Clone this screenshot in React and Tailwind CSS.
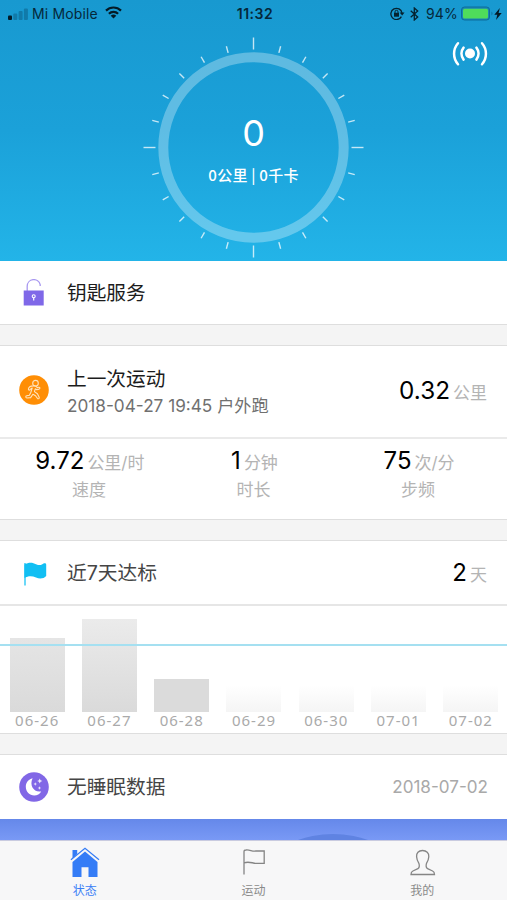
import React from "react";

const TICKS = Array.from({ length: 24 }, (_, i) => i * 15);

const DAYS = [
  { label: "06-26", height: 74, fill: "bg-linear-to-b from-[#e5e5e5] to-[#dadada]" },
  { label: "06-27", height: 93, fill: "bg-linear-to-b from-[#ebebeb] to-[#dadada]" },
  { label: "06-28", height: 33, fill: "bg-[#dbdbdb]" },
  { label: "06-29", height: 27, fill: "bg-linear-to-b from-white to-[#f5f5f5]" },
  { label: "06-30", height: 27, fill: "bg-linear-to-b from-white to-[#f5f5f5]" },
  { label: "07-01", height: 27, fill: "bg-linear-to-b from-white to-[#f5f5f5]" },
  { label: "07-02", height: 27, fill: "bg-linear-to-b from-white to-[#f5f5f5]" },
];

function StatusBar() {
  return (
    <div className="grid h-[27px] grid-cols-[1fr_auto_1fr] items-center pl-2 pr-[5px] text-[#05283a]">
      <div className="flex items-center">
        <svg width="20" height="12" viewBox="0 0 20 12">
          <rect x="0" y="7.5" width="4" height="4.5" rx="1" fill="#041a26" />
          <rect x="5.3" y="5.5" width="4" height="6.5" rx="1" fill="#117aa9" />
          <rect x="10.6" y="3" width="4" height="9" rx="1" fill="#117aa9" />
          <rect x="15.9" y="0.5" width="4" height="11.5" rx="1" fill="#117aa9" />
        </svg>
        <span className="ml-1 whitespace-nowrap text-[14px] leading-[18px] tracking-[0.15px]">Mi Mobile</span>
        <svg className="ml-[7px] -mt-0.5" width="17" height="13" viewBox="0 0 17 13" fill="none" stroke="#041a26" strokeWidth="2.2">
          <path d="M1 4.6a10.6 10.6 0 0 1 15 0" />
          <path d="M3.9 7.7a6.5 6.5 0 0 1 9.2 0" />
          <path d="M8.5 12.6 5.7 9.8a4 4 0 0 1 5.6 0Z" fill="#041a26" stroke="none" />
        </svg>
      </div>
      <div className="text-[14px] leading-[18px] font-semibold tracking-[0.55px]">11:32</div>
      <div className="flex items-center justify-end">
        <svg width="15" height="13" viewBox="0 0 15 13" fill="none" stroke="#05222f">
          <path d="M11.4 9.6A5.6 5.6 0 1 1 12 6" strokeWidth="1.3" />
          <path d="m9.6 5.6 2.6 3 2.3-3Z" fill="#05222f" stroke="none" />
          <rect x="4" y="5.8" width="5" height="3.9" fill="#05222f" stroke="none" />
          <path d="M5 6V4.8a1.5 1.500 0 0 1 3 0V6" strokeWidth="1" />
        </svg>
        <svg className="ml-[5px]" width="9" height="14" viewBox="0 0 9 14" fill="none" stroke="#05222f" strokeWidth="1.3">
          <path d="m.7 3.8 7 6.2-3.4 3V1l3.4 3-7 6.2" />
        </svg>
        <span className="ml-[7px] text-[14px] leading-[18px] tracking-[0.2px]">94%</span>
        <svg className="ml-[3px]" width="33" height="15" viewBox="0 0 33 15">
          <rect x="0.5" y="1" width="28" height="13" rx="3" fill="#1a86b6" stroke="#0c6d9b" />
          <rect x="2" y="2.7" width="25" height="9.8" rx="1.5" fill="#4fdc5b" />
          <path d="M30.5 5.5q2 2 0 4Z" fill="#0c6d9b" />
        </svg>
        <svg width="8" height="12" viewBox="0 0 8 12">
          <path d="M5.8 0 .3 6.8h3L2 12l5.7-7H4.6Z" fill="#041a26" />
        </svg>
      </div>
    </div>
  );
}

function Hero() {
  return (
    <header className="relative h-[261px] bg-linear-to-b from-[#1899d0] via-[#1ba1d9] to-[#23b4e8]">
      <StatusBar />
      <svg className="absolute top-[40px] right-[19px]" width="36" height="28" viewBox="0 0 36 28" fill="none" stroke="white" strokeWidth="2.5" strokeLinecap="round">
        <circle cx="18" cy="13.500" r="5" fill="white" stroke="none" />
        <path d="M11.600 7.600a9.400 9.400 0 0 0 0 12M24.400 7.600a9.400 9.400 0 0 1 0 12" />
        <path d="M6 3.200a16 16 0 0 0 0 21M30 3.200a16 16 0 0 1 0 21" />
      </svg>
      <svg className="absolute top-[37px] left-[143px]" width="221" height="221" viewBox="-110.5 -110.5 221 221">
        <circle r="90.2" fill="none" stroke="white" strokeOpacity="0.3" strokeWidth="10" />
        {TICKS.map((deg) => (
          <line
            key={deg}
            y1={deg % 90 === 0 ? -110 : -104.8}
            y2={-98}
            stroke="white"
            strokeOpacity="0.75"
            strokeWidth="1.4"
            transform={`rotate(${deg})`}
          />
        ))}
      </svg>
      <div className="absolute inset-x-0 top-[112px] flex flex-col items-center text-white">
        <div className="text-[36px] leading-[42px]">0</div>
        <div className="mt-3 font-['Noto_Sans_CJK_SC'] text-[15px] leading-[18px] font-medium tracking-[0.25px]">0公里 | 0千卡</div>
      </div>
    </header>
  );
}

function Stat({ value, unit, label }) {
  return (
    <div className="flex w-[164.6px] flex-col items-center">
      <div className="flex items-baseline pl-0.5">
        <span className="text-[24px] leading-[30px] text-black">{value}</span>
        <span className="ml-[3px] text-[17px] leading-[30px] text-[#b4b4b4]">{unit}</span>
      </div>
      <div className="-mt-px text-[17px] leading-[26px] text-[#b4b4b4]">{label}</div>
    </div>
  );
}

function LockIcon() {
  return (
    <svg width="22" height="27" viewBox="0 0 22 27">
      <path d="M4.2 12V7.2a6.6 6.6 0 0 1 13-1.6V7" fill="none" stroke="#a898f0" strokeWidth="1.3" />
      <rect x="0.7" y="11.5" width="20" height="15" fill="#7f68e8" />
      <circle cx="10.7" cy="17.2" r="1.5" fill="none" stroke="white" strokeWidth="1.1" />
      <path d="M10.7 18.5v3" stroke="white" strokeWidth="1.2" />
    </svg>
  );
}

function RunnerIcon() {
  return (
    <svg className="-mt-[3px]" width="30" height="30" viewBox="0 0 30 30">
      <circle cx="15" cy="15" r="14.8" fill="#ff8e05" />
      <g fill="none" stroke="#ffe3bd" strokeWidth="1.1" strokeLinejoin="round">
        <circle cx="16.500" cy="8.200" r="2.800" />
        <path d="M14.300 10.900c-2.600.2-4.600 1.200-4.900 3.100-.1 1.300 1.300 1.400 1.800.4l2-1.400-1.300 4.200-1.500 3-2.700.6c-1.300.3-1.200 2.200.2 2.200l3.700-.4 2.300-3.400 2.600 1.500 1.900 2.600c.8 1 2.300.2 1.800-1l-1.800-3.500-3-2.200.9-2.800 1.500 1 2.400-.7c1.200-.4.8-2-.4-1.800l-1.500.3-1.300-1.300c-.7-.6-1.600-.7-2.700-.4Z" />
      </g>
    </svg>
  );
}

function FlagIcon() {
  return (
    <svg className="mt-[3px] ml-[3px]" width="24" height="24" viewBox="0 0 24 24">
      <path d="M1.2 1h1.600v22.500H1.200Z" fill="#45cff7" />
      <path d="M1.400 2.500C6-.2 10 .6 13 2.200c3.500 1.600 6 .9 7.500-.6.8-.7 2.700-.5 2.700.8v11.500c-2.200 2.700-6.500 3.200-10.200 1.600-4-1.700-8-1.500-11.600.4Z" fill="#12bff3" />
    </svg>
  );
}

function MoonIcon() {
  return (
    <svg width="30" height="30" viewBox="0 0 30 30" fill="white">
      <circle cx="15" cy="15" r="14.8" fill="#8167e6" />
      <path d="M13.6 6.3C9.5 7.3 6.8 10.7 6.8 14.8c0 5 3.8 8.600 8.400 8.600 3 0 5.600-1.400 7-4-7 1.500-12.200-5.700-8.600-13.100Z" />
      <path d="m20.700 6.500.9 1.700 1.800.7-1.800.8-.9 1.700-.8-1.700-1.700-.8 1.700-.7ZM16.300 10.300l.5 1.200 1.200.5-1.200.5-.5 1.200-.6-1.200-1.200-.5 1.200-.5ZM20.500 14.300l.5 1.200 1.200.5-1.200.5-.5 1.200-.6-1.200-1.200-.5 1.200-.5Z" opacity=".85" />
    </svg>
  );
}

function Gap() {
  return <div className="h-[22px] shrink-0 border-y border-[#dedede] bg-[#f4f4f4]" />;
}

function IconSlot({ children }) {
  return <div className="flex w-[67px] shrink-0 justify-center">{children}</div>;
}

function TabBar() {
  const tab = "flex w-[168.7px] flex-col items-center text-[12px] leading-[16px]";
  return (
    <nav className="flex h-[60px] justify-center border-t border-[#c9cbe0] bg-[#f7f7f8] pt-1.5 text-[#8a8a8a]">
      <div className={tab + " text-[#3b80f6]"}>
        <svg width="30" height="30" viewBox="0 0 30 30" fill="#347cf6">
          <path d="M2.5 3h4.700v4L2.500 11.500Z" />
          <path d="m.9 12.700 14.100-11.500 14 11.500" fill="none" stroke="#347cf6" strokeWidth="1.2" />
          <path d="M15 4.500 27.500 15v15h-9v-9.700h-7V30h-9V15Z" />
        </svg>
        <div className="mt-[6px]">状态</div>
      </div>
      <div className={tab}>
        <svg width="30" height="30" viewBox="0 0 30 30" fill="none" stroke="#858585" strokeWidth="1.3">
          <path d="M5 27.500V4.500q0-1.500 2-1.500c4-.5 6 1.700 10 1h8.200v12.300h-7.700c-4 .2-7-2.300-12.500-.5" />
        </svg>
        <div className="mt-[6px]">运动</div>
      </div>
      <div className={tab}>
        <svg width="30" height="30" viewBox="0 0 30 30" fill="none" stroke="#858585" strokeWidth="1.3">
          <path d="M15.500 3.500c-4 0-6.200 2.500-5.900 6.200.2 3 1 4.700 2.300 6.700.7 2.300.6 4.300-1 5.300l-5 2.300c-1.300.6-1.900 1.500-1.900 3.500h23.500c0-2-.6-2.900-1.900-3.500l-5-2.300c-1.600-1-1.800-3-1.100-5.300 1.300-2 2.100-3.700 2.300-6.700.3-3.700-2.300-6.200-6.300-6.200Z" />
        </svg>
        <div className="mt-[6px]">我的</div>
      </div>
    </nav>
  );
}

export default function App() {
  return (
    <div className="flex h-[900px] w-[507px] flex-col overflow-hidden bg-white font-[Inter,'Noto_Sans_CJK_SC',sans-serif]">
      <Hero />
      <section className="flex h-[63px] items-center">
        <IconSlot><LockIcon /></IconSlot>
        <h2 className="pt-[3px] text-[19.7px] text-[#1c1c1c]">钥匙服务</h2>
      </section>
      <Gap />
      <section>
        <div className="flex h-[91px] items-center pr-5">
          <IconSlot><RunnerIcon /></IconSlot>
          <div className="flex-1">
            <h2 className="text-[19.7px] leading-[28px] text-[#1c1c1c]">上一次运动</h2>
            <p className="text-[17.2px] leading-[26px] text-[#707070]">2018-04-27 19:45 户外跑</p>
          </div>
          <div className="flex items-baseline pb-0.5">
            <span className="text-[24.3px] text-black">0.32</span>
            <span className="ml-[3px] text-[17px] text-[#b4b4b4]">公里</span>
          </div>
        </div>
        <div className="flex h-[82px] justify-center border-t-2 border-[#eaeaea] pt-[7px]">
          <Stat value="9.72" unit="公里/时" label="速度" />
          <Stat value="1" unit="分钟" label="时长" />
          <Stat value="75" unit="次/分" label="步频" />
        </div>
      </section>
      <Gap />
      <section>
        <div className="flex h-[63px] items-center pr-5">
          <IconSlot><FlagIcon /></IconSlot>
          <h2 className="flex-1 pt-[3px] text-[19.7px] text-[#454545]">近7天达标</h2>
          <div className="flex items-baseline">
            <span className="text-[24px] text-black">2</span>
            <span className="ml-[3px] text-[17px] text-[#b4b4b4]">天</span>
          </div>
        </div>
        <div className="relative flex h-[129px] items-end border-t-2 border-[#e6e6e6] pl-px">
          {DAYS.map((day) => (
            <div key={day.label} className="flex flex-1 flex-col items-center">
              <div className={"w-[55px] " + day.fill} style={{ height: day.height }} />
              <div className="h-[21px] font-['Noto_Sans'] text-[15px] leading-[17px] tracking-[1px] text-[#aaaaaa]">{day.label}</div>
            </div>
          ))}
          <div className="absolute inset-x-0 top-[38px] h-0.5 bg-[#a5e0f1]" />
        </div>
      </section>
      <Gap />
      <section>
        <div className="flex h-[64px] items-center pr-[19px]">
          <IconSlot><MoonIcon /></IconSlot>
          <h2 className="flex-1 pt-[2px] text-[19.7px] text-[#454545]">无睡眠数据</h2>
          <span className="text-[17.1px] text-[#a9a9a9]">2018-07-02</span>
        </div>
        <div className="relative h-[21px] overflow-hidden bg-linear-to-b from-[#6588ea] to-[#7999f5]">
          <div className="absolute top-[15px] left-[228px] size-[210px] rounded-full bg-[#5f83e2]" />
        </div>
      </section>
      <TabBar />
    </div>
  );
}
